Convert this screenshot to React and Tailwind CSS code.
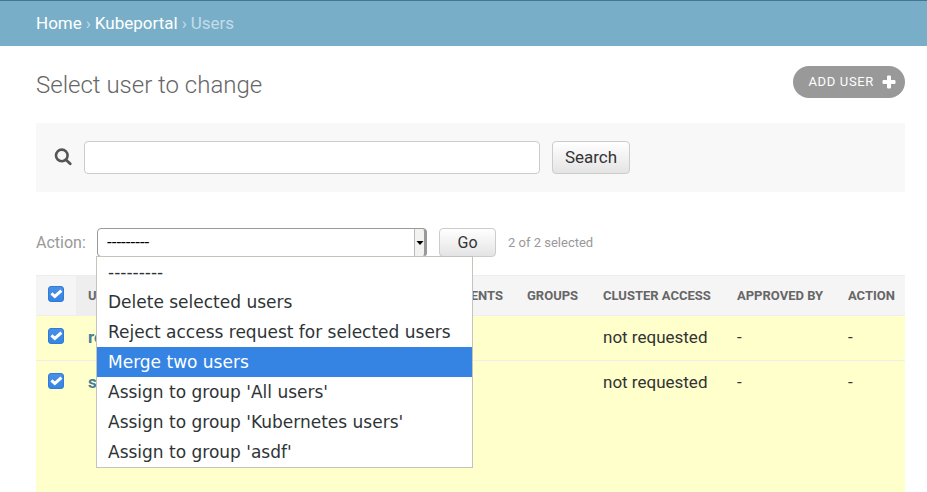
import React, { useState } from "react";

const actions = [
  "---------",
  "Delete selected users",
  "Reject access request for selected users",
  "Merge two users",
  "Assign to group 'All users'",
  "Assign to group 'Kubernetes users'",
  "Assign to group 'asdf'",
];

function Checkbox({ label }) {
  return (
    <span className="relative block h-4 w-4">
      <input
        type="checkbox"
        defaultChecked
        aria-label={label}
        className="peer block h-4 w-4 appearance-none rounded-[3px] border border-[#2f7bd8] bg-white checked:bg-linear-to-b checked:from-[#4a90e6] checked:to-[#3584e4]"
      />
      <svg viewBox="0 0 16 16" className="pointer-events-none absolute inset-0 hidden h-4 w-4 peer-checked:block">
        <path d="M3.4 7.4 L6.8 10.4 L13.4 4.6" fill="none" stroke="white" strokeWidth="3" />
      </svg>
    </span>
  );
}

function Breadcrumbs() {
  return (
    <nav className="flex h-[46px] items-center gap-1 border-t border-[#417690] bg-[#79aec8] px-9 text-[17px] text-[#c4dce8]">
      <a href="#home" className="text-white">Home</a>
      <span>›</span>
      <a href="#kubeportal" className="text-white">Kubeportal</a>
      <span>›</span>
      <span>Users</span>
    </nav>
  );
}

function ActionBar() {
  const [selected, setSelected] = useState(0);
  const [highlighted, setHighlighted] = useState(3);
  return (
    <div className="flex items-center pt-9 text-base text-[#999]">
      <label htmlFor="action" className="w-[61px]">Action:</label>
      <div className="relative w-[330px]">
        <select
          id="action"
          value={selected}
          onChange={(e) => setSelected(Number(e.target.value))}
          className="block h-[29px] w-full appearance-none rounded border border-[#999] bg-white px-[9px] text-[17px] text-black outline-none"
        >
          {actions.map((a, i) => <option key={a} value={i}>{a}</option>)}
        </select>
        <span className="pointer-events-none absolute inset-y-px right-0 flex w-[13px] items-center justify-center rounded-r border-r-3 border-l border-[#999] border-l-[#bbb] bg-[#f2f2f0]">
          <svg viewBox="0 0 8 4" className="h-1 w-2"><path d="M0.5 0h7L4 4z" fill="black" /></svg>
        </span>
        <ul role="listbox" aria-label="Actions" className="absolute top-7 -left-px z-10 w-[377px] border border-[#c6c3bd] bg-white font-['DejaVu_Sans',sans-serif] text-[17px] leading-[30px] text-[#2e3436]">
          {actions.map((a, i) => (
            <li
              key={a}
              role="option"
              aria-selected={i === highlighted}
              onMouseEnter={() => setHighlighted(i)}
              onClick={() => setSelected(i)}
              className="px-[11px] whitespace-nowrap aria-selected:bg-[#3584e4] aria-selected:text-white"
            >
              {a}
            </li>
          ))}
        </ul>
      </div>
      <button className="ml-3 h-[29px] w-[57px] rounded border border-[#ccc] bg-linear-to-b from-white to-[#e4e4e4] text-[#333]">Go</button>
      <span className="ml-3 text-[13px]">2 of 2 selected</span>
    </div>
  );
}

const users = [
  { name: "root", cell: "h-[45px] py-3" },
  { name: "sa", cell: "h-[131px] py-3" },
];

function UserTable() {
  return (
    <table className="mt-[18px] w-full table-fixed border-collapse text-left">
      <colgroup>
        <col className="w-10" />
        <col />
        <col className="w-[110px]" />
        <col className="w-[76px]" />
        <col className="w-[134px]" />
        <col className="w-[111px]" />
        <col className="w-[69px]" />
      </colgroup>
      <thead>
        <tr className="h-10 border-y border-[#eee] bg-[#f5f5f5] text-[13px] text-[#666] uppercase">
          <th className="px-3 pb-1"><Checkbox label="Select all users" /></th>
          <th className="bg-[#eee] px-3 font-bold">Username</th>
          <th className="px-3 text-right font-bold">Comments</th>
          <th className="px-3 font-bold">Groups</th>
          <th className="px-3 font-bold whitespace-nowrap">Cluster access</th>
          <th className="px-3 font-bold whitespace-nowrap">Approved by</th>
          <th className="pl-3 font-bold">Action</th>
        </tr>
      </thead>
      <tbody className="text-[17px] leading-[18px] text-[#333]">
        {users.map((u) => (
          <tr key={u.name} className="border-b border-[#eee] bg-[#ffffcc] align-top last:border-b-0">
            <td className={"px-3 " + u.cell}><Checkbox label={"Select " + u.name} /></td>
            <th className={"px-3 font-bold " + u.cell}><a href="#user" className="text-[#447e9b]">{u.name}</a></th>
            <td className={"px-3 " + u.cell} />
            <td className={"px-3 " + u.cell} />
            <td className={"px-3 whitespace-nowrap " + u.cell}>not requested</td>
            <td className={"px-3 " + u.cell}>-</td>
            <td className={"px-3 " + u.cell}>-</td>
          </tr>
        ))}
      </tbody>
    </table>
  );
}

export default function App() {
  return (
    <div className="bg-white font-[Roboto,sans-serif]">
      <Breadcrumbs />
      <main className="pr-[22px] pl-9">
        <header className="flex items-start justify-between pt-5">
          <h1 className="pt-1 text-2xl leading-[30px] font-light text-[#666]">Select user to change</h1>
          <a href="#add" className="flex h-8 items-center gap-2 rounded-full bg-[#999] pr-[9px] pl-[15px] text-[13px] tracking-wider text-white uppercase">
            Add user
            <svg viewBox="0 0 14 14" className="h-3.5 w-3.5"><path d="M5.5 1h3v4.5H13v3H8.5V13h-3V8.5H1v-3h4.5z" fill="white" stroke="white" strokeLinejoin="round" /></svg>
          </a>
        </header>
        <form onSubmit={(e) => e.preventDefault()} className="mt-[23px] flex h-[69px] items-center bg-[#f8f8f8] pl-[18px]">
          <label htmlFor="search" aria-label="Search users" className="mr-3 mb-0.5">
            <svg viewBox="0 0 18 18" className="h-[18px] w-[18px]" fill="none" stroke="#555">
              <circle cx="7.8" cy="7.4" r="5.8" strokeWidth="2.6" />
              <path d="M12.2 12l4 3.8" strokeWidth="2.8" strokeLinecap="round" />
            </svg>
          </label>
          <input id="search" type="text" className="h-[33px] w-[456px] rounded border border-[#ccc] bg-white px-2 text-[17px] outline-none" />
          <button className="ml-3 h-[33px] w-[78px] rounded border border-[#ccc] bg-linear-to-b from-white to-[#e4e4e4] text-[17px] text-[#333]">Search</button>
        </form>
        <ActionBar />
        <UserTable />
      </main>
    </div>
  );
}
